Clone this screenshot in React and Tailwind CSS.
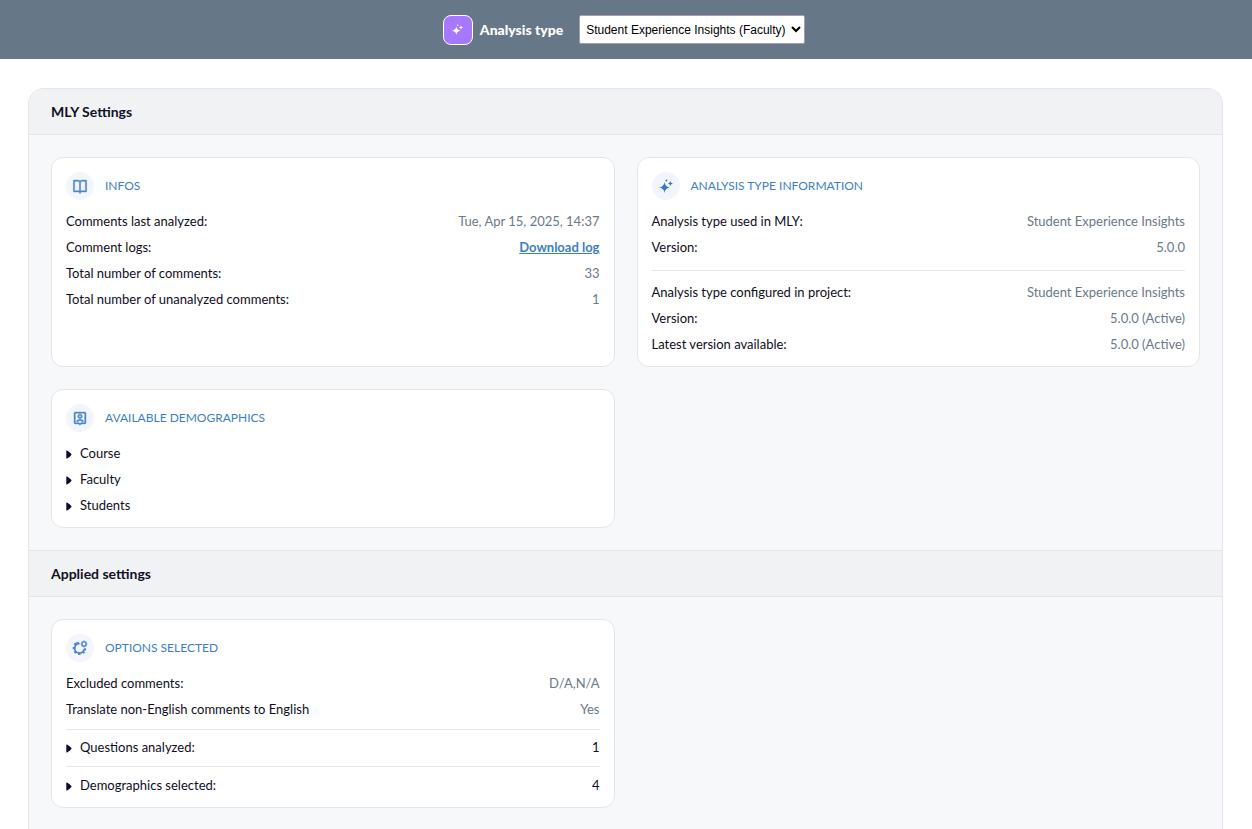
import React from "react";
import { RiBookOpenLine, RiAccountPinBoxLine } from "react-icons/ri";

function SparkleIcon({ className }) {
  return (
    <svg viewBox="0 0 14 14" className={className} fill="currentColor" aria-hidden="true">
      <path d="M5.5 3Q6 7.9 11 8.5Q6 9.1 5.5 14Q5 9.1 0 8.5Q5 7.9 5.5 3Z" />
      <path d="M11.4 2Q11.7 4.1 14 4.5Q11.7 4.9 11.4 7Q11.1 4.9 8.8 4.5Q11.1 4.1 11.4 2Z" />
      <path d="M7.4 0Q7.6 1.3 8.8 1.5Q7.6 1.7 7.4 3Q7.2 1.7 6 1.5Q7.2 1.3 7.4 0Z" />
    </svg>
  );
}

function GearsIcon({ className }) {
  return (
    <svg viewBox="0 0 16 16" className={className} fill="none" stroke="currentColor" aria-hidden="true">
      <path d="M7.6 3.6A4.7 4.7 0 1 0 12 9.4" strokeWidth="1.7" />
      <path
        d="M3.9 4.9L2.5 3.3M2.6 8.2H.8M3.8 11.5L2.5 12.9M7.3 12.8V15M10.7 11.5L12.5 13M5.7 3.7L5.3 1.9M12 9.4H14"
        strokeWidth="2.2"
      />
      <circle cx="12" cy="4" r="2.1" strokeWidth="1.3" />
      <path
        d="M12 .6V1.8M12 6.2V7.4M8.6 4H9.8M14.2 4H15.4M9.6 1.6L10.5 2.5M13.5 5.5L14.4 6.4M9.6 6.4L10.5 5.5M13.5 2.5L14.4 1.6"
        strokeWidth="1.2"
      />
    </svg>
  );
}

function Marker() {
  return (
    <svg viewBox="0 0 6 10" className="mr-2 h-[9px] w-[6px] shrink-0" fill="#0d0b33" aria-hidden="true">
      <path d="M0 1Q0 .2.8.5Q3.5 1.8 5.6 4.5Q6 5 5.6 5.5Q3.5 8.2.8 9.5Q0 9.8 0 9Z" />
    </svg>
  );
}

function SectionHeader({ children }) {
  return (
    <h2 className="flex h-[46px] items-center border-b border-[#e2e5e9] bg-[#f1f2f4] px-[22px] text-[14px] font-bold text-[#130f26]">
      {children}
    </h2>
  );
}

function Card({ icon, title, children }) {
  return (
    <section className="rounded-xl border border-[#e2e5e9] bg-white px-[14px] pt-[14px] pb-2">
      <header className="mb-[9px] flex items-center gap-[11px]">
        <span className="flex size-7 items-center justify-center rounded-full bg-[#f2f6fc] text-[#4a86cf]">
          {icon}
        </span>
        <h3 className="text-[12px] text-[#3d7fc6] uppercase">{title}</h3>
      </header>
      {children}
    </section>
  );
}

function Row({ label, children }) {
  return (
    <div className="flex h-[26px] items-center justify-between">
      <dt>{label}</dt>
      <dd className="text-[#6a7a8a]">{children}</dd>
    </div>
  );
}

function Disclosure({ label, value }) {
  return (
    <details>
      <summary className="flex h-[26px] cursor-pointer list-none items-center">
        <Marker />
        <span>{label}</span>
        {value && <span className="ml-auto">{value}</span>}
      </summary>
    </details>
  );
}

export default function App() {
  return (
    <div className="min-h-screen bg-white font-['Lato',sans-serif] text-[13px] text-[#100d24]">
      <header className="flex h-[59px] items-center justify-center bg-[#667788] pr-1">
        <span className="mr-[7px] flex size-[30px] items-center justify-center rounded-lg border border-white bg-[#a678ff] text-white">
          <SparkleIcon className="size-[11px]" />
        </span>
        <label htmlFor="analysis-type" className="mr-4 text-[14px] font-black text-white">
          Analysis type
        </label>
        <select
          id="analysis-type"
          className="h-[29px] w-[226px] rounded-xs border border-[#a5a0ad] bg-white px-[2px] font-['Liberation_Sans',sans-serif] text-[12px] text-black"
        >
          <option>Student Experience Insights (Faculty)</option>
        </select>
      </header>

      <main className="mt-[29px] mr-[29px] ml-7 overflow-hidden rounded-t-2xl border border-b-0 border-[#e2e5e9] bg-[#f7f8fa]">
        <SectionHeader>MLY Settings</SectionHeader>
        <div className="grid grid-cols-2 gap-[22px] p-[22px]">
          <Card
            icon={<RiBookOpenLine className="size-4 stroke-current stroke-[0.6px]" />}
            title="Infos"
          >
            <dl>
              <Row label="Comments last analyzed:">Tue, Apr 15, 2025, 14:37</Row>
              <Row label="Comment logs:">
                <a href="#log" className="font-bold text-[#3d7fc6] underline">
                  Download log
                </a>
              </Row>
              <Row label="Total number of comments:">33</Row>
              <Row label="Total number of unanalyzed comments:">1</Row>
            </dl>
          </Card>
          <Card icon={<SparkleIcon className="size-[14px] text-[#3579bf]" />} title="Analysis type information">
            <dl>
              <Row label="Analysis type used in MLY:">Student Experience Insights</Row>
              <Row label="Version:">5.0.0</Row>
            </dl>
            <hr className="my-[9px] border-[#e2e5e9]" />
            <dl>
              <Row label="Analysis type configured in project:">Student Experience Insights</Row>
              <Row label="Version:">5.0.0 (Active)</Row>
              <Row label="Latest version available:">5.0.0 (Active)</Row>
            </dl>
          </Card>
          <Card
            icon={<RiAccountPinBoxLine className="size-4 stroke-current stroke-[0.6px]" />}
            title="Available demographics"
          >
            <Disclosure label="Course" />
            <Disclosure label="Faculty" />
            <Disclosure label="Students" />
          </Card>
        </div>

        <div className="border-t border-[#e2e5e9]">
          <SectionHeader>Applied settings</SectionHeader>
        </div>
        <div className="grid grid-cols-2 gap-[22px] p-[22px]">
          <Card icon={<GearsIcon className="size-4" />} title="Options selected">
            <dl>
              <Row label="Excluded comments:">D/A,N/A</Row>
              <Row label="Translate non-English comments to English">Yes</Row>
            </dl>
            <div className="mt-[6px] border-t border-[#e2e5e9] py-[5px]">
              <Disclosure label="Questions analyzed:" value="1" />
            </div>
            <div className="border-t border-[#e2e5e9] pt-[6px]">
              <Disclosure label="Demographics selected:" value="4" />
            </div>
          </Card>
        </div>
      </main>
    </div>
  );
}
